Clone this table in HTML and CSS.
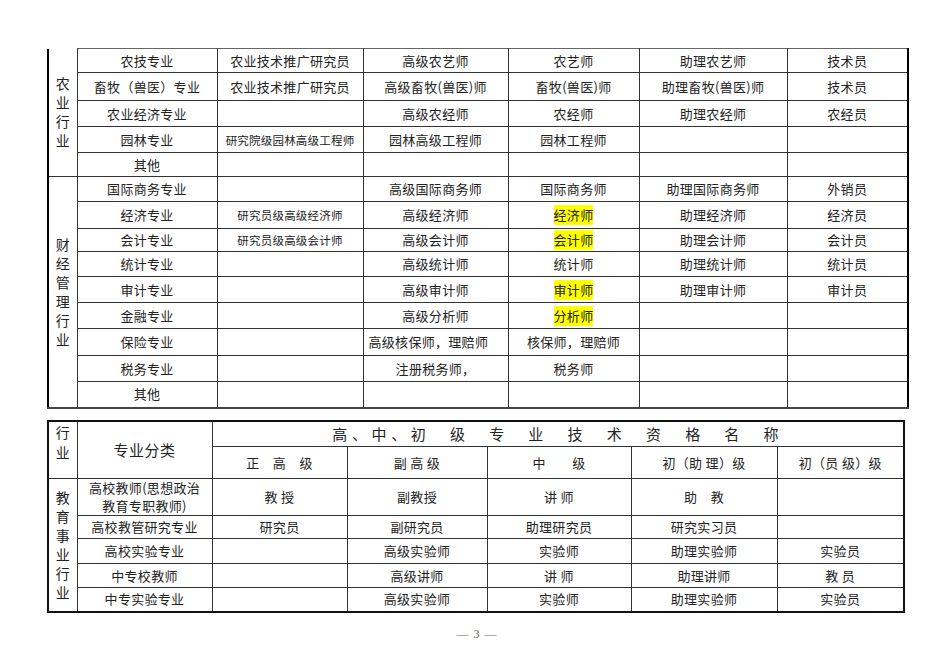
FILE: index.html
```html
<!DOCTYPE html>
<html lang="zh-CN">
<head>
<meta charset="utf-8">
<title>专业技术资格名称</title>
<link rel="stylesheet" href="styles.css">
</head>
<body>
<div class="page">
  <table class="grid t1">
    <colgroup>
      <col class="a0"><col class="a1"><col class="a2"><col class="a3"><col class="a4"><col class="a5"><col class="a6">
    </colgroup>
    <tbody>
      <tr class="h24 first">
        <td class="ind notop" rowspan="5"><div class="vt">农业行业</div></td>
        <td>农技专业</td><td>农业技术推广研究员</td><td>高级农艺师</td><td>农艺师</td><td>助理农艺师</td><td class="rb">技术员</td>
      </tr>
      <tr class="h28">
        <td>畜牧（兽医）专业</td><td>农业技术推广研究员</td><td>高级畜牧(兽医)师</td><td>畜牧(兽医)师</td><td>助理畜牧(兽医)师</td><td class="rb">技术员</td>
      </tr>
      <tr class="h26">
        <td>农业经济专业</td><td></td><td>高级农经师</td><td>农经师</td><td>助理农经师</td><td class="rb">农经员</td>
      </tr>
      <tr class="h26">
        <td>园林专业</td><td class="sm">研究院级园林高级工程师</td><td>园林高级工程师</td><td>园林工程师</td><td></td><td class="rb"></td>
      </tr>
      <tr class="h24">
        <td>其他</td><td></td><td></td><td></td><td></td><td class="rb"></td>
      </tr>
      <tr class="h25">
        <td class="ind bot" rowspan="9"><div class="vt">财经管理行业</div></td>
        <td>国际商务专业</td><td></td><td>高级国际商务师</td><td>国际商务师</td><td>助理国际商务师</td><td class="rb">外销员</td>
      </tr>
      <tr class="h27">
        <td>经济专业</td><td class="sm">研究员级高级经济师</td><td>高级经济师</td><td><span class="hl">经济师</span></td><td>助理经济师</td><td class="rb">经济员</td>
      </tr>
      <tr class="h23">
        <td>会计专业</td><td class="sm">研究员级高级会计师</td><td>高级会计师</td><td><span class="hl">会计师</span></td><td>助理会计师</td><td class="rb">会计员</td>
      </tr>
      <tr class="h25">
        <td>统计专业</td><td></td><td>高级统计师</td><td>统计师</td><td>助理统计师</td><td class="rb">统计员</td>
      </tr>
      <tr class="h26">
        <td>审计专业</td><td></td><td>高级审计师</td><td><span class="hl">审计师</span></td><td>助理审计师</td><td class="rb">审计员</td>
      </tr>
      <tr class="h26">
        <td>金融专业</td><td></td><td>高级分析师</td><td><span class="hl">分析师</span></td><td></td><td class="rb"></td>
      </tr>
      <tr class="h27">
        <td>保险专业</td><td></td><td class="lft">高级核保师，理赔师</td><td>核保师，理赔师</td><td></td><td class="rb"></td>
      </tr>
      <tr class="h26">
        <td>税务专业</td><td></td><td>注册税务师，</td><td>税务师</td><td></td><td class="rb"></td>
      </tr>
      <tr class="h26 last">
        <td>其他</td><td></td><td></td><td></td><td></td><td class="rb"></td>
      </tr>
    </tbody>
  </table>

  <table class="grid t2">
    <colgroup>
      <col class="b0"><col class="b1"><col class="b2"><col class="b3"><col class="b4"><col class="b5"><col class="b6">
    </colgroup>
    <tbody>
      <tr class="h26">
        <td class="hind" rowspan="2"><div class="vt vt2">行业</div></td>
        <td class="hcat" rowspan="2">专业分类</td>
        <td class="htitle" colspan="5">高、中、初　级　专　业　技　术　资　格　名　称</td>
      </tr>
      <tr class="h32 sub">
        <td>正　高　级</td><td>副 高 级</td><td>中　　级</td><td>初（助 理）级</td><td>初（员 级）级</td>
      </tr>
      <tr class="h36">
        <td class="ind" rowspan="5"><div class="vt">教育事业行业</div></td>
        <td class="two">高校教师(思想政治教育专职教师)</td><td>教 授</td><td>副教授</td><td>讲 师</td><td>助　教</td><td></td>
      </tr>
      <tr class="h23">
        <td>高校教管研究专业</td><td>研究员</td><td>副研究员</td><td>助理研究员</td><td>研究实习员</td><td></td>
      </tr>
      <tr class="h25">
        <td>高校实验专业</td><td></td><td>高级实验师</td><td>实验师</td><td>助理实验师</td><td>实验员</td>
      </tr>
      <tr class="h24">
        <td>中专校教师</td><td></td><td>高级讲师</td><td>讲 师</td><td>助理讲师</td><td>教 员</td>
      </tr>
      <tr class="h24">
        <td>中专实验专业</td><td></td><td>高级实验师</td><td>实验师</td><td>助理实验师</td><td>实验员</td>
      </tr>
    </tbody>
  </table>

  <div class="pageno">— 3 —</div>
</div>
</body>
</html>
```

FILE: styles.css
```css
html, body {
  margin: 0;
  padding: 0;
  background: #ffffff;
}

body {
  font-family: "Noto Sans CJK SC", "Noto Sans", sans-serif;
  color: #222;
}

.page {
  width: 950px;
  height: 672px;
  padding: 48px 0 0 47px;
  box-sizing: border-box;
}

.grid {
  border-collapse: collapse;
  table-layout: fixed;
}

.grid td {
  padding: 0;
  text-align: center;
  vertical-align: middle;
  font-size: 13px;
  letter-spacing: 0.3px;
  line-height: 18px;
  border: 1px solid #333;
  white-space: nowrap;
  overflow: hidden;
}

/* table 1 */
.t1 {
  width: 860px;
}
.t1 .a0 { width: 29px; }
.t1 .a1 { width: 140px; }
.t1 .a2 { width: 146px; }
.t1 .a3 { width: 145px; }
.t1 .a4 { width: 131px; }
.t1 .a5 { width: 148px; }
.t1 .a6 { width: 121px; }

.t1 .first td {
  border-top: 1px solid #666;
}
.t1 td.ind {
  border-left: 2px solid #000;
}
.t1 td.notop {
  border-top: none !important;
}
.t1 td.rb {
  border-right: 2px solid #000;
}
.t1 .last td,
.t1 td.bot {
  border-bottom: 2px solid #444;
}

.t1 td.sm {
  font-size: 11.5px;
  letter-spacing: 0.2px;
}
.t1 td.lft {
  text-align: left;
  padding-left: 5px;
}

.hl {
  background: #ffff00;
  display: inline-block;
  line-height: 20px;
}

/* vertical industry labels */
.vt {
  width: 14px;
  margin: 0 auto;
  font-size: 14px;
  line-height: 19px;
  letter-spacing: 0;
  white-space: normal;
  word-break: break-all;
}
.vt2 {
  line-height: 20px;
}

/* table 2 */
.t2 {
  width: 856px;
  margin-top: 11px;
  border: 2px solid #111;
}
.t2 .b0 { width: 29px; }
.t2 .b1 { width: 135px; }
.t2 .b2 { width: 135px; }
.t2 .b3 { width: 140px; }
.t2 .b4 { width: 144px; }
.t2 .b5 { width: 146px; }
.t2 .b6 { width: 127px; }

.t2 td.hind {
  vertical-align: top;
  overflow: visible;
}
.t2 td.hcat {
  font-size: 15px;
  letter-spacing: 0.5px;
}
.t2 td.htitle {
  font-size: 15px;
  letter-spacing: 4.6px;
  line-height: 16px;
}
.t2 .sub td {
  font-size: 13px;
}
.t2 td.two {
  white-space: normal;
  line-height: 18px;
  padding: 0 8px;
}

/* row heights */
.h23 { height: 23px; }
.h24 { height: 24px; }
.h25 { height: 25px; }
.h26 { height: 26px; }
.h27 { height: 27px; }
.h28 { height: 28px; }
.h32 { height: 32px; }
.h36 { height: 36px; }

.pageno {
  margin-top: 14px;
  width: 860px;
  text-align: center;
  font-family: "Liberation Serif", "DejaVu Serif", serif;
  font-size: 12px;
  color: #666;
  letter-spacing: 1px;
}
```
